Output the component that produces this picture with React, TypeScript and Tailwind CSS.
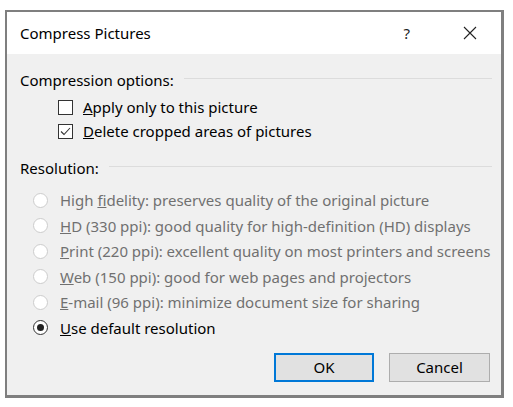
import React from "react";

const font = { fontFamily: '"Noto Sans", "Open Sans", Arial, sans-serif' };

function Checkbox({ checked, label }: { checked?: boolean; label: React.ReactNode }) {
  return (
    <div className="flex h-[24px] items-center pl-[38px]">
      <div className="flex h-[15px] w-[15px] items-center justify-center border border-[#333333] bg-white">
        {checked && (
          <svg width="11" height="9" viewBox="0 0 11 9" fill="none">
            <path d="M1 4.5 L4 7.5 L10 1" stroke="#333333" strokeWidth="1.1" />
          </svg>
        )}
      </div>
      <span className="ml-[10px] text-[15px] text-black">{label}</span>
    </div>
  );
}

function Radio({ checked, disabled, label }: { checked?: boolean; disabled?: boolean; label: React.ReactNode }) {
  return (
    <div className="flex h-[25.5px] items-center pl-[13px]">
      <div
        className={`flex h-[15px] w-[15px] items-center justify-center rounded-full border bg-white ${
          disabled ? "border-[#cccccc]" : "border-[#333333]"
        }`}
      >
        {checked && <div className="h-[7px] w-[7px] rounded-full bg-[#222222]" />}
      </div>
      <span className={`ml-[12px] text-[15px] ${disabled ? "text-[#707070]" : "text-black"}`}>{label}</span>
    </div>
  );
}

function SectionLabel({ text }: { text: string }) {
  return (
    <div className="flex h-[24px] items-center">
      <span className="text-[15px] text-black">{text}</span>
      <div className="ml-[10px] mt-[-3px] h-px flex-1 bg-[#dcdcdc]" />
    </div>
  );
}

export default function App() {
  return (
    <div className="min-h-screen bg-white pl-[5px] pt-[10px]" style={font}>
      <div className="flex h-[388px] w-[499px] flex-col border-t-2 border-l-2 border-r-[3px] border-b-[3px] border-[#7f7f7f]">
        {/* Title bar */}
        <div className="flex h-[42px] shrink-0 items-center bg-white pl-[13px]">
          <span className="text-[15px] text-black">Compress Pictures</span>
          <span className="ml-auto text-[15px] text-[#222222]">?</span>
          <div className="ml-[53px] mr-[24px] flex h-[14px] w-[14px] items-center justify-center">
            <svg width="14" height="14" viewBox="0 0 14 14" fill="none">
              <path d="M1 1 L13 13 M13 1 L1 13" stroke="#222222" strokeWidth="1.1" />
            </svg>
          </div>
        </div>

        {/* Body */}
        <div className="flex flex-1 flex-col bg-[#f0f0f0] pl-[13px] pr-[9px] pt-[14px]">
          <SectionLabel text="Compression options:" />
          <div className="mt-[3px]">
            <Checkbox label={<><span className="underline">A</span>pply only to this picture</>} />
            <Checkbox checked label={<><span className="underline">D</span>elete cropped areas of pictures</>} />
          </div>

          <div className="mt-[13px]">
            <SectionLabel text="Resolution:" />
          </div>
          <div className="mt-[7.5px]">
            <Radio disabled label={<>High <span className="underline">f</span>idelity: preserves quality of the original picture</>} />
            <Radio disabled label={<><span className="underline">H</span>D (330 ppi): good quality for high-definition (HD) displays</>} />
            <Radio disabled label={<><span className="underline">P</span>rint (220 ppi): excellent quality on most printers and screens</>} />
            <Radio disabled label={<><span className="underline">W</span>eb (150 ppi): good for web pages and projectors</>} />
            <Radio disabled label={<><span className="underline">E</span>-mail (96 ppi): minimize document size for sharing</>} />
            <Radio checked label={<><span className="underline">U</span>se default resolution</>} />
          </div>

          <div className="mt-[12px] flex justify-end gap-[15px] pr-[2px]">
            <button className="flex h-[29px] w-[100px] items-center justify-center border-2 border-[#0078d7] bg-[#e1e1e1] text-[15px] text-black">
              OK
            </button>
            <button className="flex h-[29px] w-[101px] items-center justify-center border border-[#adadad] bg-[#e1e1e1] text-[15px] text-black">
              Cancel
            </button>
          </div>
        </div>
      </div>
    </div>
  );
}
